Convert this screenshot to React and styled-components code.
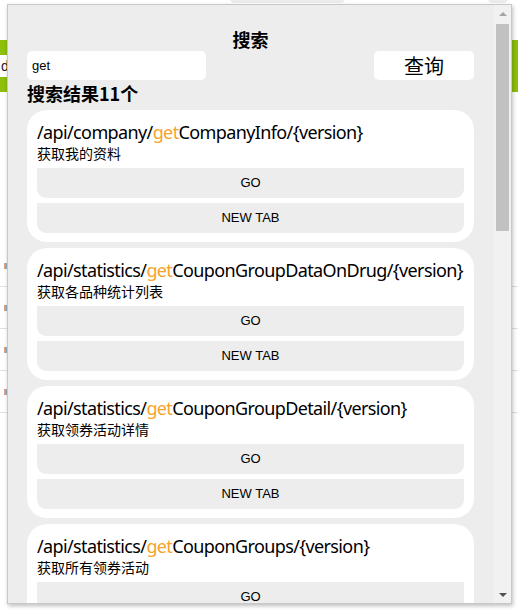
import React from 'react'
import styled, { createGlobalStyle } from 'styled-components'

const Global = createGlobalStyle`
  html, body { margin: 0; padding: 0; background: #fff; }
  body { width: 518px; height: 614px; overflow: hidden; position: relative; font-family: "Noto Sans", "Noto Sans CJK SC", sans-serif; }
`

const Page = styled.div`
  position: relative;
  width: 518px;
  height: 614px;
  overflow: hidden;
  background: #fff;
`

const TopPill = styled.div`
  position: absolute;
  top: -6px;
  left: ${({ left }) => left}px;
  width: ${({ w }) => w}px;
  height: 9px;
  border-radius: 6px;
  background: #ececec;
`

const GreenBar = styled.div`
  margin-top: 40px;
  height: 52px;
  background: #8dbf0b;
  display: flex;
  align-items: center;
`

const PageInput = styled.div`
  height: 22px;
  width: 120px;
  background: #fff;
  font: 14px "Liberation Sans", Arial, sans-serif;
  line-height: 22px;
  color: #222;
  padding-left: 1px;
`

const Rows = styled.div`
  margin-top: 153px;
  display: flex;
  flex-direction: column;
`

const PageRow = styled.div`
  height: 41px;
  border-bottom: 1px solid #e0e0e0;
  display: flex;
  align-items: center;
  padding-left: 4px;
`

const RowMark = styled.span`
  width: 3px;
  height: 6px;
  background: linear-gradient(90deg, #e0a080 50%, #8fb0c8 50%);
`

const Popup = styled.div`
  position: absolute;
  left: 7px;
  top: 4px;
  width: 503px;
  height: 598px;
  border: 1px solid #c8c8c8;
  box-shadow: 1px 2px 4px rgba(0, 0, 0, 0.25);
  background: #ededed;
  display: flex;
  overflow: hidden;
`

const Content = styled.div`
  flex: 1;
  overflow: hidden;
  padding: 22px 20px 0 19px;
  display: flex;
  flex-direction: column;
`

const Title = styled.div`
  text-align: center;
  font: bold 18px "Noto Sans CJK SC", sans-serif;
  line-height: 24px;
  color: #000;
`

const SearchRow = styled.div`
  display: flex;
  justify-content: space-between;
  align-items: center;
`

const Input = styled.div`
  width: 179px;
  height: 29px;
  background: #fff;
  border-radius: 5px;
  box-sizing: border-box;
  padding-left: 5px;
  font: 13px "Liberation Sans", Arial, sans-serif;
  line-height: 29px;
  color: #000;
`

const QueryBtn = styled.div`
  width: 100px;
  height: 29px;
  background: #fff;
  border-radius: 5px;
  text-align: center;
  font: 20px "Noto Sans CJK SC", sans-serif;
  line-height: 29px;
  color: #000;
`

const Count = styled.div`
  font: bold 18px "Noto Sans CJK SC", sans-serif;
  line-height: 24px;
  margin-top: 1px;
  margin-bottom: 5px;
  color: #000;
`

const List = styled.div`
  display: flex;
  flex-direction: column;
  gap: 6px;
`

const Card = styled.div`
  background: #fff;
  border-radius: 20px;
  padding: 10px 10px 9px;
  display: flex;
  flex-direction: column;
`

const Path = styled.div`
  font: 18px "Noto Sans", "Open Sans", sans-serif;
  line-height: 24px;
  color: #000;
  white-space: nowrap;
  letter-spacing: -0.62px;
`

const Hit = styled.span`
  color: #f7a32b;
`

const Desc = styled.div`
  font: 14px "Noto Sans CJK SC", sans-serif;
  line-height: 18px;
  color: #000;
  margin-bottom: 6px;
`

const Btn = styled.div`
  height: 30px;
  background: #ededed;
  border-radius: 0 0 9px 9px;
  text-align: center;
  font: 13px "Liberation Sans", Arial, sans-serif;
  line-height: 30px;
  color: #000;
  & + & { margin-top: 5px; }
`

const Scrollbar = styled.div`
  width: 17px;
  background: #f1f1f1;
  display: flex;
  flex-direction: column;
  align-items: center;
  position: relative;
`

const Arrow = styled.div`
  width: 0;
  height: 0;
  border-left: 4px solid transparent;
  border-right: 4px solid transparent;
  ${({ down }) => down
    ? 'border-top: 4px solid #505050; position: absolute; bottom: 6px;'
    : 'border-bottom: 4px solid #a3a3a3; margin-top: 7px;'}
`

const Thumb = styled.div`
  width: 13px;
  height: 207px;
  background: #c1c1c1;
  margin-top: 8px;
`

const results = [
  { pre: '/api/company/', post: 'CompanyInfo/{version}', desc: '获取我的资料' },
  { pre: '/api/statistics/', post: 'CouponGroupDataOnDrug/{version}', desc: '获取各品种统计列表' },
  { pre: '/api/statistics/', post: 'CouponGroupDetail/{version}', desc: '获取领券活动详情' },
  { pre: '/api/statistics/', post: 'CouponGroups/{version}', desc: '获取所有领券活动' },
]

export default function App() {
  return (
    <Page>
      <Global />
      <TopPill left={230} w={115} />
      <TopPill left={488} w={20} />
      <GreenBar>
        <PageInput>d</PageInput>
      </GreenBar>
      <Rows>
        {[0, 1, 2, 3].map(i => (
          <PageRow key={i}><RowMark /></PageRow>
        ))}
      </Rows>
      <Popup>
        <Content>
          <Title>搜索</Title>
          <SearchRow>
            <Input>get</Input>
            <QueryBtn>查询</QueryBtn>
          </SearchRow>
          <Count>搜索结果11个</Count>
          <List>
            {results.map((r, i) => (
              <Card key={i}>
                <Path>{r.pre}<Hit>get</Hit>{r.post}</Path>
                <Desc>{r.desc}</Desc>
                <Btn>GO</Btn>
                <Btn>NEW TAB</Btn>
              </Card>
            ))}
          </List>
        </Content>
        <Scrollbar>
          <Arrow />
          <Thumb />
          <Arrow down />
        </Scrollbar>
      </Popup>
    </Page>
  )
}
